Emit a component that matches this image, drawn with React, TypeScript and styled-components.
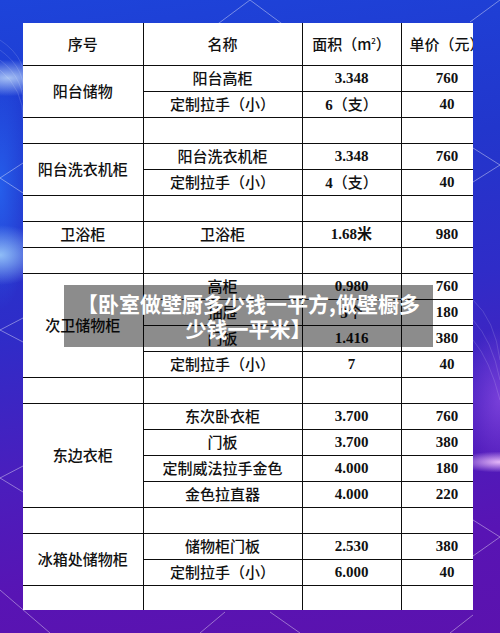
import React from "react";
import styled, { createGlobalStyle } from "styled-components";

const GlobalStyle = createGlobalStyle`
  html, body { margin: 0; padding: 0; }
  body { width: 500px; height: 633px; overflow: hidden; }
`;

const Page = styled.div`
  position: relative;
  width: 500px;
  height: 633px;
  overflow: hidden;
  box-sizing: border-box;
  padding: 23px 0 0 23px;
  background:
    radial-gradient(ellipse 70px 26px at 8px 78px, rgba(210, 235, 255, 0.75), rgba(210, 235, 255, 0) 70%),
    radial-gradient(ellipse 60px 40px at 0px 255px, rgba(170, 220, 255, 0.8), rgba(170, 220, 255, 0) 75%),
    radial-gradient(ellipse 40px 150px at 0px 190px, rgba(40, 120, 255, 0.6), rgba(40, 120, 255, 0) 80%),
    radial-gradient(ellipse 60px 14px at 500px 462px, rgba(245, 200, 255, 0.9), rgba(245, 200, 255, 0) 75%),
    radial-gradient(ellipse 50px 90px at 500px 400px, rgba(160, 90, 240, 0.55), rgba(160, 90, 240, 0) 80%),
    linear-gradient(172deg, #1d44da 0%, #2236cc 28%, #2f2cc8 48%, #4a1ebd 68%, #5814b4 85%, #5b12ae 100%);
  font-family: "Noto Sans CJK SC", "Noto Sans", sans-serif;
`;

const Decor = styled.svg`
  position: absolute;
  left: 0;
  top: 0;
  width: 500px;
  height: 633px;
  pointer-events: none;
`;

const TableClip = styled.div`
  position: relative;
  width: 450px;
  height: 587px;
  overflow: hidden;
  background: #ffffff;
`;

const Table = styled.table`
  width: 470px;
  table-layout: fixed;
  border-collapse: collapse;
  border: none;
`;

const HeadRow = styled.tr`
  height: 42px;
`;

const BodyRow = styled.tr`
  height: 26px;
`;

const Cell = styled.td<{ $num?: boolean }>`
  border: none;
  border-right: 1.7px solid #0d0d0d;
  border-bottom: 1.7px solid #0d0d0d;
  padding: 0;
  text-align: center;
  vertical-align: middle;
  white-space: nowrap;
  color: #111;
  font-size: 15px;
  line-height: 18px;
  font-family: ${(p) =>
    p.$num
      ? `"Liberation Serif", "Noto Sans CJK SC", serif`
      : `"Noto Sans CJK SC", "Noto Sans", sans-serif`};
  font-weight: ${(p) => (p.$num ? 700 : 500)};
`;

const Cjk = styled.span`
  font-family: "Noto Sans CJK SC", "Noto Sans", sans-serif;
  font-weight: 500;
`;

const Sup = styled.sup`
  font-size: 8px;
  vertical-align: 6px;
  line-height: 0;
`;

const Banner = styled.div`
  position: absolute;
  left: 64px;
  top: 285px;
  width: 369px;
  height: 62px;
  box-sizing: border-box;
  padding-top: 6px;
  background: rgba(0, 0, 0, 0.45);
  display: flex;
  justify-content: center;
`;

const BannerText = styled.div`
  text-align: center;
  white-space: nowrap;
  color: #ffffff;
  font-family: "Noto Sans CJK SC", "Noto Sans", sans-serif;
  font-weight: 700;
  font-size: 21px;
  line-height: 25px;
`;

type Item = [string, string, string];
type Group = { name: string; items: Item[] };

const groups: Group[] = [
  { name: "阳台储物", items: [["阳台高柜", "3.348", "760"], ["定制拉手（小）", "6（支）", "40"]] },
  { name: "阳台洗衣机柜", items: [["阳台洗衣机柜", "3.348", "760"], ["定制拉手（小）", "4（支）", "40"]] },
  { name: "卫浴柜", items: [["卫浴柜", "1.68米", "980"]] },
  {
    name: "次卫储物柜",
    items: [
      ["高柜", "0.980", "760"],
      ["抽屉", "3个", "180"],
      ["门板", "1.416", "380"],
      ["定制拉手（小）", "7", "40"],
    ],
  },
  {
    name: "东边衣柜",
    items: [
      ["东次卧衣柜", "3.700", "760"],
      ["门板", "3.700", "380"],
      ["定制威法拉手金色", "4.000", "180"],
      ["金色拉直器", "4.000", "220"],
    ],
  },
  { name: "冰箱处储物柜", items: [["储物柜门板", "2.530", "380"], ["定制拉手（小）", "6.000", "40"]] },
];

function NumText({ text }: { text: string }) {
  const parts = text.split(/([\uff08\uff09\u4e00-\u9fff]+)/).filter(Boolean);
  return (
    <>
      {parts.map((p, i) =>
        /[\uff08\uff09\u4e00-\u9fff]/.test(p) && p !== "米" ? <Cjk key={i}>{p}</Cjk> : <span key={i}>{p}</span>
      )}
    </>
  );
}

export default function App() {
  const rows: React.ReactNode[] = [];
  groups.forEach((g, gi) => {
    g.items.forEach((it, ii) => {
      rows.push(
        <BodyRow key={`${gi}-${ii}`}>
          {ii === 0 && <Cell rowSpan={g.items.length}>{g.name}</Cell>}
          <Cell>{it[0]}</Cell>
          <Cell $num>
            <NumText text={it[1]} />
          </Cell>
          <Cell $num>{it[2]}</Cell>
        </BodyRow>
      );
    });
    rows.push(
      <BodyRow key={`${gi}-empty`}>
        <Cell />
        <Cell />
        <Cell />
        <Cell />
      </BodyRow>
    );
  });

  return (
    <>
      <GlobalStyle />
      <Page>
        <Decor viewBox="0 0 500 633">
          <g stroke="rgba(255,255,255,0.4)" strokeWidth="1" fill="none">
            <polyline points="215,26 250,0 285,26" />
            <polyline points="470,22 500,0" />
            <polyline points="23,163 0,178 23,193" />
            <polyline points="23,318 0,330 23,342" />
            <polyline points="23,466 0,478 23,492" />
            <polyline points="473,148 500,165 473,182" />
            <polyline points="473,520 500,537 473,556" />
            <polyline points="0,590 50,633" />
            <polyline points="200,633 225,612" />
            <polyline points="270,612 300,633" />
            <polyline points="450,633 473,615" />
          </g>
          <g stroke="rgba(255,255,255,0.18)" strokeWidth="0.8" fill="none">
            <path d="M0,40 Q30,60 23,90" />
            <path d="M0,50 Q28,70 23,100" />
            <path d="M0,60 Q26,80 23,110" />
            <path d="M0,70 Q24,90 23,120" />
            <path d="M473,300 Q495,320 500,360" />
            <path d="M473,320 Q492,340 500,380" />
            <path d="M473,340 Q490,360 500,400" />
          </g>
        </Decor>
        <TableClip>
          <Table>
            <colgroup>
              <col style={{ width: 120 }} />
              <col style={{ width: 159 }} />
              <col style={{ width: 99 }} />
              <col style={{ width: 92 }} />
            </colgroup>
            <tbody>
              <HeadRow>
                <Cell>序号</Cell>
                <Cell>名称</Cell>
                <Cell>
                  面积（m<Sup>2</Sup>）
                </Cell>
                <Cell>单价（元）</Cell>
              </HeadRow>
              {rows}
            </tbody>
          </Table>
        </TableClip>
        <Banner>
          <BannerText>
            【卧室做壁厨多少钱一平方,做壁橱多
            <br />
            少钱一平米】
          </BannerText>
        </Banner>
      </Page>
    </>
  );
}
